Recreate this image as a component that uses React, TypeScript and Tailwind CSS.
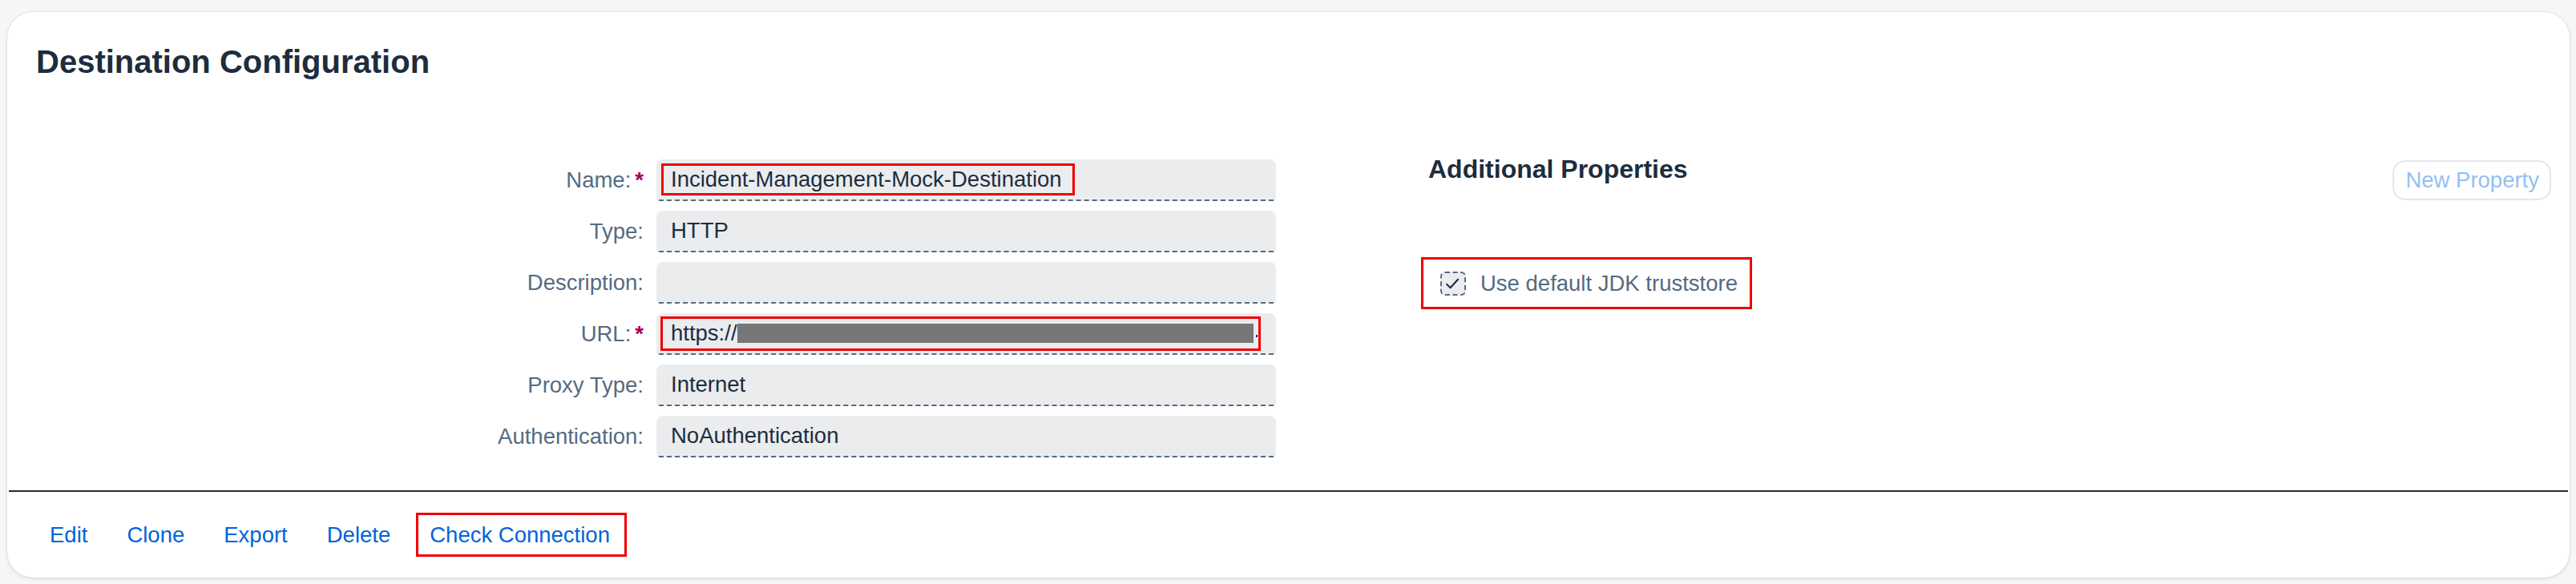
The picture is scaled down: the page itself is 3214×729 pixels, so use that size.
import React from 'react'

const fields = [
  { label: 'Name:', required: true, value: 'Incident-Management-Mock-Destination', mark: 'name' },
  { label: 'Type:', value: 'HTTP' },
  { label: 'Description:', value: '' },
  { label: 'URL:', required: true, value: 'https://', mark: 'url' },
  { label: 'Proxy Type:', value: 'Internet' },
  { label: 'Authentication:', value: 'NoAuthentication' },
]

function ReadOnlyField({ value, mark }: { value: string; mark?: string }) {
  return (
    <div className="flex h-[52px] flex-col rounded-t-[8px] rounded-b-[4px] bg-[#eaecee]">
      {mark === 'name' && (
        <div className="flex flex-1 items-center pl-[6px]">
          <div className="flex h-[40px] items-center border-[3px] border-[#e00] pl-[9px] pr-[13px] text-[#1d2d3e]">{value}</div>
        </div>
      )}
      {mark === 'url' && (
        <div className="flex flex-1 items-center pl-[5px]">
          <div className="flex h-[43px] w-[749px] items-center border-[3px] border-[#e00] pl-[10px] text-[#1d2d3e]">
            <span>{value}</span>
            <span className="h-[24px] w-[644px] bg-[#777777]" />
            <span className="ml-[3px] mt-[6px] h-[3px] w-[2px] bg-[#1d2d3e]" />
          </div>
        </div>
      )}
      {!mark && <div className="flex flex-1 items-center pl-[18px] text-[#1d2d3e]">{value}</div>}
      <div className="mx-[3px] border-t-2 border-dashed border-[#556b82]" />
    </div>
  )
}

export default function App() {
  return (
    <div className="min-h-screen w-full bg-[#f5f6f7] pl-[9px] pr-[8px] pt-[15px] font-['Liberation_Sans',Arial,sans-serif] text-[27.5px]">
      <div className="flex h-[706px] flex-col rounded-[32px] bg-white shadow-[0_0_2px_rgba(0,0,0,0.18),0_2px_5px_rgba(0,0,0,0.08)]">
        <h1 className="pl-[36px] pt-[42px] text-[40px] font-bold leading-[40px] text-[#1d2d3e]">Destination Configuration</h1>

        <div className="mt-[102px] flex">
          <div className="grid w-[1583px] grid-cols-[794px_773px] gap-x-[16px] gap-y-[12px]">
            {fields.map((f) => (
              <React.Fragment key={f.label}>
                <div className="flex h-[52px] items-center justify-end text-[#556b82]">
                  {f.label}
                  {f.required && <span className="pl-[5px] font-bold text-[#a5005f]">*</span>}
                </div>
                <ReadOnlyField value={f.value} mark={f.mark} />
              </React.Fragment>
            ))}
          </div>

          <div className="ml-[181px] mr-[23px] flex flex-1 flex-col items-start">
            <div className="flex w-full items-start justify-between">
              <h2 className="-mt-[4px] ml-[9px] text-[32px] font-bold leading-[32px] text-[#1d2d3e]">Additional Properties</h2>
              <button className="mt-[1px] h-[50px] rounded-[16px] border-2 border-[#e4e7ea] pl-[14px] pr-[13px] text-[#93c0f2]">
                New Property
              </button>
            </div>
            <div className="mt-[71px] flex h-[65px] items-center border-[3px] border-[#e00] pl-[21px] pr-[15px]">
              <span className="flex h-[30px] w-[32px] items-center justify-center rounded-[6px] border-2 border-dashed border-[#556b82] bg-[#eaecee]">
                <svg width="32" height="30" viewBox="0 0 32 30" fill="none">
                  <path d="M7 16 L12 21 L23 9" stroke="#1d2d3e" strokeWidth="2.4" strokeLinecap="round" strokeLinejoin="round" />
                </svg>
              </span>
              <span className="ml-[18px] text-[#556b82]">Use default JDK truststore</span>
            </div>
          </div>
        </div>

        <div className="mx-[2px] mt-[41px] h-[2px] bg-[#1f2d3d]" />

        <div className="flex flex-1 items-center gap-[49px] pl-[53px] text-[#0064d9]">
          <button>Edit</button>
          <button>Clone</button>
          <button>Export</button>
          <button>Delete</button>
          <button className="-ml-[17px] flex h-[55px] items-center border-[3px] border-[#e00] pl-[14px] pr-[18px]">Check Connection</button>
        </div>
      </div>
    </div>
  )
}
